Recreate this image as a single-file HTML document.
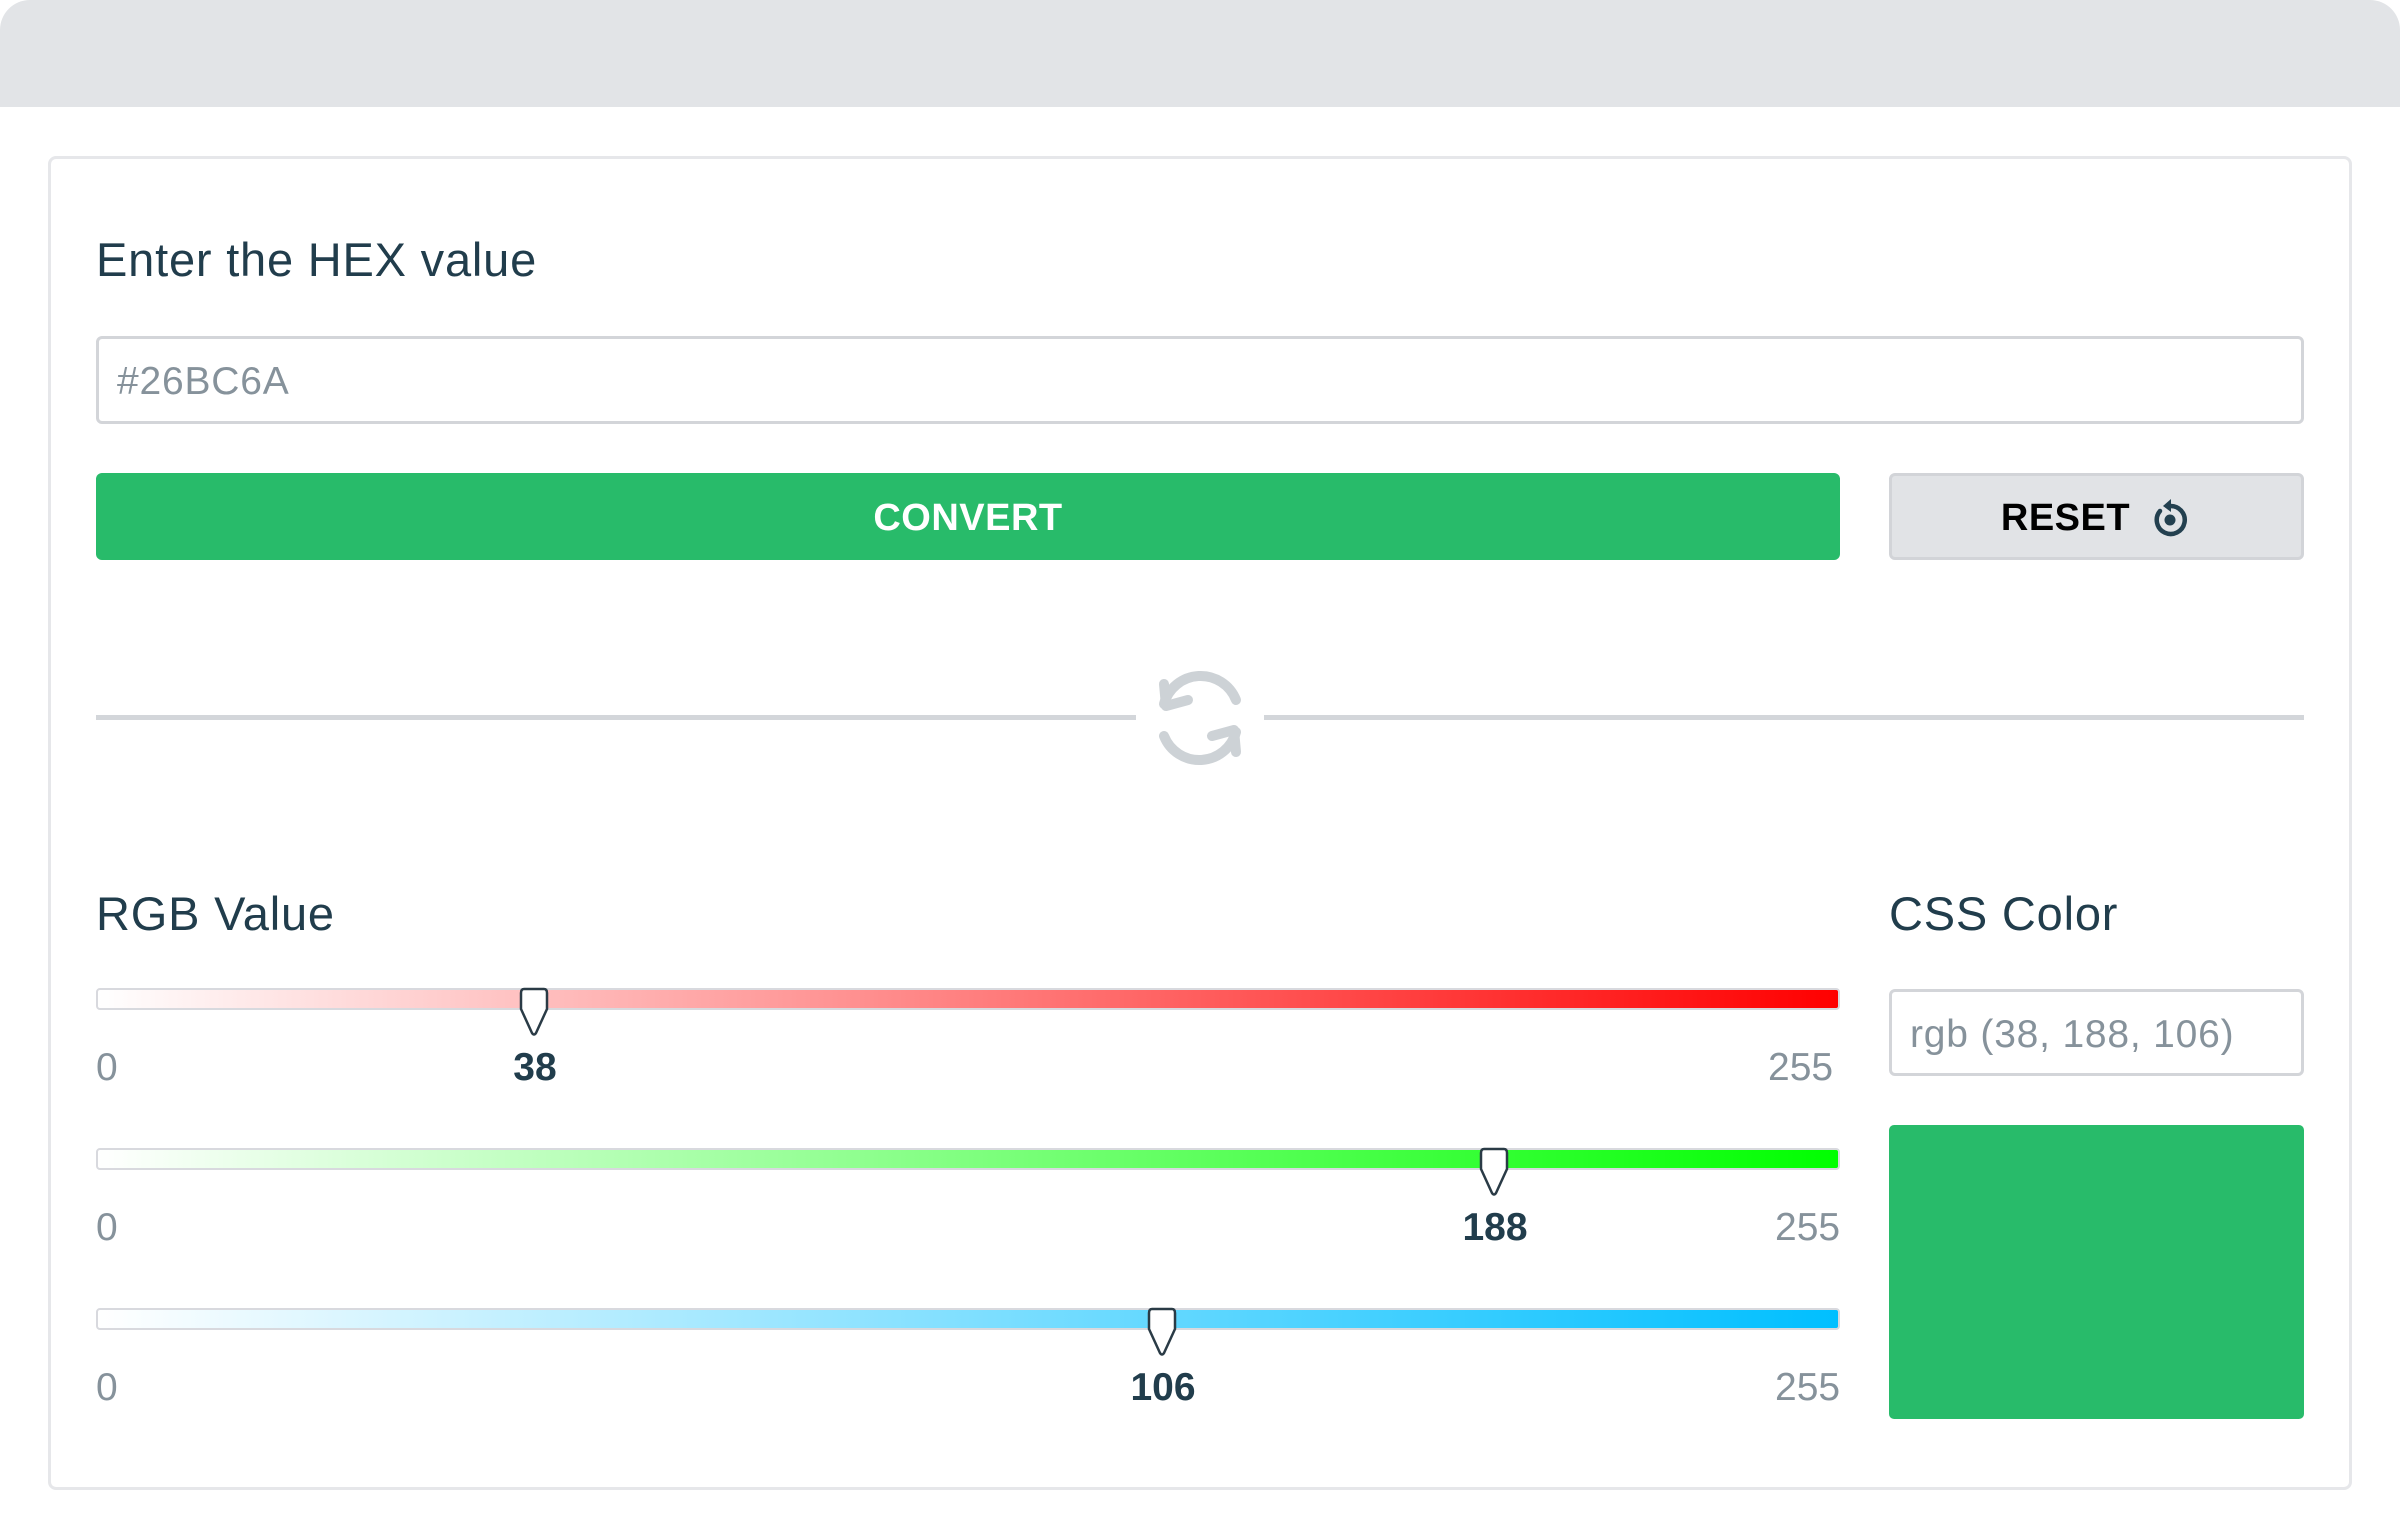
<!DOCTYPE html>
<html><head><meta charset="utf-8"><style>
*{box-sizing:border-box;margin:0;padding:0}
body{width:2400px;height:1540px;background:#fff;position:relative;overflow:hidden;font-family:"Liberation Sans",sans-serif;color:#213d4c}
.abs{position:absolute}
.hdr{left:0;top:0;width:2400px;height:107px;background:#e2e4e7;border-radius:30px 30px 0 0}
.card{left:48px;top:156px;width:2304px;height:1334px;border:3px solid #e6e7ea;border-radius:8px}
.h{font-size:47px;letter-spacing:0.8px;line-height:1}
.inp{border:3px solid #d3d5d9;border-radius:6px;background:#fff;color:#86929b;font-size:39px;letter-spacing:0.8px;display:flex;align-items:center}
.btn{border-radius:6px;display:flex;align-items:center;justify-content:center;font-weight:bold;font-size:38px;letter-spacing:0.5px}
.track{left:96px;width:1744px;height:22px;border-radius:4px;border:2px solid #d8d9de}
.lbl{font-size:39px;color:#86929b;line-height:1}
.val{font-size:39px;font-weight:bold;color:#213d4c;line-height:1;transform:translateX(-50%)}
</style></head><body>
<div class="abs hdr"></div>
<div class="abs card"></div>
<div class="abs h" style="left:96px;top:236px">Enter the HEX value</div>
<div class="abs inp" style="left:96px;top:336px;width:2208px;height:88px;padding-left:18px;padding-top:4px">#26BC6A</div>
<div class="abs btn" style="left:96px;top:473px;width:1744px;height:87px;background:#28bb6a;color:#fff;padding-top:4px">CONVERT</div>
<div class="abs btn" style="left:1889px;top:473px;width:415px;height:87px;background:#e1e3e6;border:3px solid #d2d4d8;color:#000;padding-top:4px">RESET
<svg width="44" height="44" viewBox="0 0 44 44" style="margin-left:18px"><path d="M12 14 A14 14 0 1 0 22 9" fill="none" stroke="#23404f" stroke-width="4.5" stroke-linecap="round"/><path d="M23 2 L15 9 L23 15 Z" fill="#23404f"/><circle cx="22" cy="23" r="5.5" fill="#23404f"/></svg></div>
<div class="abs" style="left:96px;top:715px;width:1040px;height:5px;background:#d3d6da"></div>
<div class="abs" style="left:1264px;top:715px;width:1040px;height:5px;background:#d3d6da"></div>
<svg class="abs" style="left:1150px;top:668px" width="100" height="100" viewBox="0 0 100 100"><g fill="none" stroke="#cdd2d6" stroke-width="10" stroke-linecap="round" stroke-linejoin="round"><path d="M14 36 A38 38 0 0 1 86 32"/><path d="M86 64 A38 38 0 0 1 14 68"/><path d="M14 16 L16 38 L38 32"/><path d="M86 84 L84 62 L62 68"/></g></svg>
<div class="abs h" style="left:96px;top:890px">RGB Value</div>
<div class="abs h" style="left:1889px;top:890px">CSS Color</div>
<div class="abs track" style="top:988px;background:linear-gradient(90deg,#fff,#ff0000)"></div>
<div class="abs track" style="top:1148px;background:linear-gradient(90deg,#fff,#00ff00)"></div>
<div class="abs track" style="top:1308px;background:linear-gradient(90deg,#fff,#00bfff)"></div>
<svg class="abs" style="left:519px;top:987px" width="30" height="50" viewBox="0 0 30 50"><path d="M5 2 H25 Q28 2 28 6 V22 L17 46 Q15 49 13 46 L2 22 V6 Q2 2 5 2 Z" fill="#fff" stroke="#2a3b46" stroke-width="2.5"/></svg>
<svg class="abs" style="left:1479px;top:1147px" width="30" height="50" viewBox="0 0 30 50"><path d="M5 2 H25 Q28 2 28 6 V22 L17 46 Q15 49 13 46 L2 22 V6 Q2 2 5 2 Z" fill="#fff" stroke="#2a3b46" stroke-width="2.5"/></svg>
<svg class="abs" style="left:1147px;top:1307px" width="30" height="50" viewBox="0 0 30 50"><path d="M5 2 H25 Q28 2 28 6 V22 L17 46 Q15 49 13 46 L2 22 V6 Q2 2 5 2 Z" fill="#fff" stroke="#2a3b46" stroke-width="2.5"/></svg>
<div class="abs lbl" style="left:96px;top:1048px">0</div>
<div class="abs lbl" style="left:1768px;top:1048px">255</div>
<div class="abs val" style="left:535px;top:1048px">38</div>
<div class="abs lbl" style="left:96px;top:1208px">0</div>
<div class="abs lbl" style="left:1775px;top:1208px">255</div>
<div class="abs val" style="left:1495px;top:1208px">188</div>
<div class="abs lbl" style="left:96px;top:1368px">0</div>
<div class="abs lbl" style="left:1775px;top:1368px">255</div>
<div class="abs val" style="left:1163px;top:1368px">106</div>
<div class="abs inp" style="left:1889px;top:989px;width:415px;height:87px;padding-left:18px;padding-top:4px">rgb (38, 188, 106)</div>
<div class="abs" style="left:1889px;top:1125px;width:415px;height:294px;background:#28bb6a;border-radius:5px"></div>
</body></html>
